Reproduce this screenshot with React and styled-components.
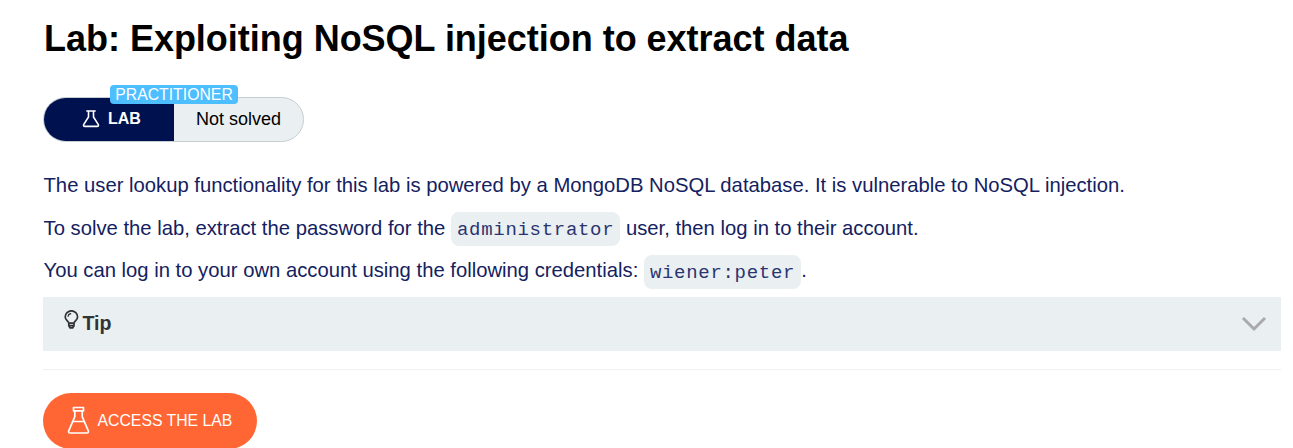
import React from 'react';
import styled, { createGlobalStyle } from 'styled-components';

const GlobalStyle = createGlobalStyle`
  * { box-sizing: border-box; }
  body { margin: 0; background: #fff; overflow: hidden; }
`;

const Page = styled.main`
  height: 448px;
  overflow: hidden;
  padding: 18px 12px 0 43px;
  font-family: 'Liberation Sans', Arial, sans-serif;
  color: #14215f;
`;

const Title = styled.h1`
  margin: 0;
  padding-left: 1px;
  font-size: 36px;
  line-height: 42px;
  letter-spacing: -0.02px;
  font-weight: 700;
  color: #000;
  white-space: nowrap;
`;

const Status = styled.div`
  position: relative;
  display: flex;
  width: 261px;
  height: 45px;
  margin-top: 37px;
  border: 1px solid #c5ced0;
  border-radius: 23px;
  background: #eaeff2;
`;

const StatusType = styled.div`
  display: flex;
  align-items: center;
  width: 130px;
  padding: 0 0 2px 38px;
  gap: 7px;
  border-radius: 22px 0 0 22px;
  background: #00114f;
  color: #fff;
  font-size: 16px;
  font-weight: 700;
`;

const StatusText = styled.div`
  flex: 1;
  padding-left: 22px;
  line-height: 42px;
  font-size: 18px;
  color: #000;
  white-space: nowrap;
`;

const Level = styled.span`
  position: absolute;
  left: 66px;
  top: -13px;
  width: 128px;
  height: 19px;
  border-radius: 4px;
  background: #4dbeff;
  color: #fff;
  font-size: 15.8px;
  line-height: 19px;
  text-align: center;
`;

const Text = styled.p`
  height: 34px;
  margin: 0 0 ${(p) => p.$gap}px;
  padding-left: 0.5px;
  font-size: 20.25px;
  line-height: ${(p) => p.$line}px;
  white-space: nowrap;
`;

const Description = styled.section`
  padding-top: 26px;
`;

const Code = styled.code`
  display: inline-block;
  height: 34px;
  padding: 0 6px;
  border-radius: 8px;
  background: #eaeff2;
  color: #2a3570;
  font-family: 'Courier New', 'Liberation Mono', monospace;
  font-size: 19px;
  letter-spacing: 0.7px;
  line-height: 36px;
  vertical-align: top;
`;

const Tip = styled.div`
  display: flex;
  align-items: center;
  height: 54px;
  padding: 0 14px 0 21px;
  background: #eaeff2;
  color: #333;
  font-size: 20px;
  font-weight: 700;
`;

const TipLabel = styled.span`
  flex: 1;
  margin: 0 0 2px 3.5px;
  font-size: 19.6px;
`;

const BulbIcon = styled.svg`
  margin-bottom: 8px;
`;

const Divider = styled.hr`
  height: 1px;
  margin: 18px 0 23px;
  border: 0;
  background: #f0f0f0;
`;

const AccessButton = styled.button`
  display: flex;
  align-items: center;
  gap: 6.5px;
  width: 214px;
  height: 56px;
  padding: 0 0 1px 24px;
  border: 0;
  border-radius: 28px;
  background: #ff6633;
  color: #fff;
  font-family: inherit;
  font-size: 15.8px;
  white-space: nowrap;
`;

const SmallFlask = () => (
  <svg width="19" height="18" viewBox="0 0 19 18" fill="none" stroke="#fff" strokeWidth="1.6">
    <path d="M4.3 1h9.4M6.5 1v6L1.8 14.3c-.7 1.3-.1 2.1 1 2.1h12.4c1.1 0 1.7-.8 1-2.1L11.5 7V1" />
  </svg>
);

const LargeFlask = () => (
  <svg width="24" height="29" viewBox="0 0 24 29" fill="none" stroke="#fff" strokeWidth="1.7" strokeLinejoin="round">
    <path d="M6.5 1.5h10v3.3h-10zM7.8 4.8v5.9L1.8 24.7c-.6 1.3 0 2.3 1.3 2.3h16.8c1.3 0 1.9-1 1.3-2.3l-6-14V4.8" />
    <path d="M6 15.5h11" strokeWidth="1.5" />
  </svg>
);

const Bulb = () => (
  <BulbIcon width="15" height="20" viewBox="0 0 15 20" fill="none" stroke="#333" strokeWidth="1.7">
    <path d="M4.8 13.2c0-2-3.6-3.1-3.6-6.2a6.2 6.2 0 0 1 12.4 0c0 3.1-3.6 4.2-3.6 6.2zM4.8 13.2v2.6l1.3 2h2.6l1.3-2v-2.6M4.8 15.6H10" />
    <path d="M4 6.8a3.4 3.4 0 0 1 3.2-3.2" strokeWidth="1.2" />
  </BulbIcon>
);

const Chevron = () => (
  <svg width="26" height="16" viewBox="0 0 26 16" fill="none" stroke="#aaa" strokeWidth="3">
    <path d="M2 2l11 11L24 2" />
  </svg>
);

export default function App() {
  return (
    <Page>
      <GlobalStyle />
      <Title>Lab: Exploiting NoSQL injection to extract data</Title>
      <Status>
        <StatusType><SmallFlask />LAB</StatusType>
        <StatusText>Not solved</StatusText>
        <Level>PRACTITIONER</Level>
      </Status>
      <Description>
        <Text $gap={10} $line={34}>The user lookup functionality for this lab is powered by a MongoDB NoSQL database. It is vulnerable to NoSQL injection.</Text>
        <Text $gap={9} $line={32}>To solve the lab, extract the password for the <Code>administrator</Code> user, then log in to their account.</Text>
        <Text $gap={8} $line={30}>You can log in to your own account using the following credentials: <Code>wiener:peter</Code>.</Text>
      </Description>
      <Tip><Bulb /><TipLabel>Tip</TipLabel><Chevron /></Tip>
      <Divider />
      <AccessButton><LargeFlask />ACCESS THE LAB</AccessButton>
    </Page>
  );
}
